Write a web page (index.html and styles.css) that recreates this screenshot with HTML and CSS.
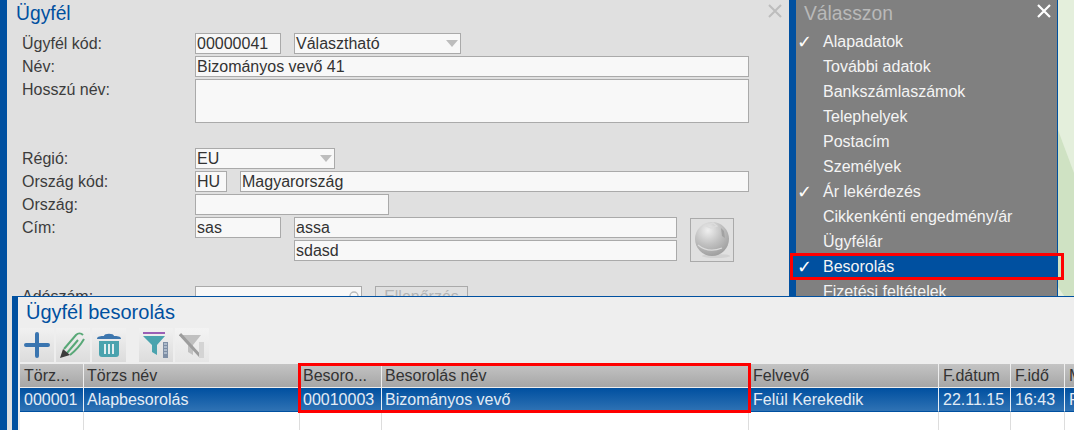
FILE: index.html
```html
<!DOCTYPE html>
<html lang="hu">
<head>
<meta charset="utf-8">
<title>Ügyfél</title>
<link rel="stylesheet" href="styles.css">
</head>
<body>
<div class="screen">
  <section class="form-panel">
    <header class="form-head">
      <h1 class="title">Ügyfél</h1>
      <svg class="close" width="14" height="14" viewBox="0 0 14 14"><path d="M1 1L13 13M13 1L1 13" stroke="#bdbdbd" stroke-width="2" fill="none"/></svg>
    </header>
    <div class="row">
      <label class="lbl">Ügyfél kód:</label>
      <div class="fld w86">00000041</div>
      <div class="fld sel w167 ml13">Választható<i class="arrow"></i></div>
    </div>
    <div class="row">
      <label class="lbl">Név:</label>
      <div class="fld w554">Bizományos vevő 41</div>
    </div>
    <div class="row tall">
      <label class="lbl">Hosszú név:</label>
      <div class="fld w554 h44"></div>
    </div>
    <div class="row gap-top">
      <label class="lbl">Régió:</label>
      <div class="fld sel w140">EU<i class="arrow"></i></div>
    </div>
    <div class="row">
      <label class="lbl">Ország kód:</label>
      <div class="fld w32">HU</div>
      <div class="fld w509 ml13">Magyarország</div>
    </div>
    <div class="row">
      <label class="lbl">Ország:</label>
      <div class="fld w194"></div>
    </div>
    <div class="addr">
      <label class="lbl">Cím:</label>
      <div class="fld w86">sas</div>
      <div class="addr-lines">
        <div class="fld w383">assa</div>
        <div class="fld w383">sdasd</div>
      </div>
      <div class="globe-btn">
        <svg width="36" height="38" viewBox="0 0 36 38">
          <defs>
            <radialGradient id="gl" cx="38%" cy="25%" r="80%">
              <stop offset="0" stop-color="#efefef"/>
              <stop offset=".5" stop-color="#c2c2c2"/>
              <stop offset="1" stop-color="#9c9c9c"/>
            </radialGradient>
          </defs>
          <ellipse cx="22" cy="35" rx="14" ry="2" fill="#d2d2d2"/>
          <circle cx="18" cy="18" r="17" fill="url(#gl)"/>
          <path d="M27 7l3 3 1 7-3-2z" fill="#a2a2a2"/>
          <path d="M12 5l7-3 4 3-6 2zM4 24c6 5 14 7 24 3" stroke="#dcdcdc" stroke-width="1.2" fill="none"/>
        </svg>
      </div>
    </div>
    <div class="row tax">
      <label class="lbl">Adószám:</label>
      <div class="fld w167"><svg class="lens" width="12" height="12" viewBox="0 0 12 12"><circle cx="6" cy="6" r="4" stroke="#bbb" stroke-width="1.4" fill="none"/></svg></div>
      <div class="btn-check">Ellenőrzés</div>
    </div>
  </section>

  <nav class="menu">
    <div class="menu-head">
      <span class="menu-title">Válasszon</span>
      <svg width="14" height="14" viewBox="0 0 14 14"><path d="M1 1L13 13M13 1L1 13" stroke="#fff" stroke-width="2.2" fill="none"/></svg>
    </div>
    <ul class="menu-list">
      <li class="item on">Alapadatok</li>
      <li class="item">További adatok</li>
      <li class="item">Bankszámlaszámok</li>
      <li class="item">Telephelyek</li>
      <li class="item">Postacím</li>
      <li class="item">Személyek</li>
      <li class="item on">Ár lekérdezés</li>
      <li class="item">Cikkenkénti engedmény/ár</li>
      <li class="item">Ügyfélár</li>
      <li class="item on active">Besorolás</li>
      <li class="item">Fizetési feltételek</li>
    </ul>
  </nav>

  <aside class="wallpaper">
    <svg class="wall-art" width="16" height="300" viewBox="0 0 16 300">
      <rect width="16" height="300" fill="#e4efdc"/>
      <path d="M0 130L16 173V300H9L0 287z" fill="#cfe2c3"/>
    </svg>
  </aside>

  <section class="sub-panel">
    <h2 class="sub-title">Ügyfél besorolás</h2>
    <div class="toolbar">
      <button class="tool">
        <svg width="26" height="26" viewBox="0 0 26 26"><path d="M13 2V24M2 13H24" stroke="#3a75b0" stroke-width="4" stroke-linecap="round" fill="none"/></svg>
      </button>
      <button class="tool">
        <svg width="28" height="28" viewBox="0 0 28 28"><path d="M5 18L17 4c2-2 5-2 7 0M8 22L19 9M11 24c5-4 10-9 14-16" stroke="#58a877" stroke-width="2" fill="none"/><path d="M1 27l3-9 7 6z" fill="#3c3c3c"/></svg>
      </button>
      <button class="tool">
        <svg width="26" height="26" viewBox="0 0 26 26"><path d="M1 7c0-3 4-3 7-3 0-3 10-3 10 0 3 0 7 0 7 3z" fill="#3d76ae"/><path d="M3 9H23V22c0 2-1 3-3 3H6c-2 0-3-1-3-3z" fill="#4aa3ae"/><path d="M9 12V22M13 12V22M17 12V22" stroke="#e2eef0" stroke-width="2"/></svg>
      </button>
      <button class="tool tool-gap">
        <svg width="26" height="26" viewBox="0 0 26 26"><path d="M0 1H22" stroke="#9a5fb5" stroke-width="2"/><path d="M0 4H22L14 13V23L9 20V13z" fill="#4aa3ae"/><rect x="20" y="10" width="5" height="16" fill="#7f8fa5"/><path d="M21 12h3M21 15h3M21 18h3M21 21h3" stroke="#dde6f0"/></svg>
      </button>
      <button class="tool off">
        <svg width="26" height="26" viewBox="0 0 26 26"><path d="M0 3H22L14 13V23L9 20V13z" fill="#c0c0c0"/><path d="M1 2L22 25" stroke="#9d9d9d" stroke-width="3"/><rect x="20" y="10" width="5" height="16" fill="#d4d4d4"/></svg>
      </button>
    </div>
    <div class="grid">
      <div class="hd">Törz...</div>
      <div class="hd tight">Törzs név</div>
      <div class="hd tight">Besoro...</div>
      <div class="hd tight">Besorolás név</div>
      <div class="hd">Felvevő</div>
      <div class="hd">F.dátum</div>
      <div class="hd">F.idő</div>
      <div class="hd">M</div>
      <div class="cell">000001</div>
      <div class="cell tight">Alapbesorolás</div>
      <div class="cell tight">00010003</div>
      <div class="cell tight">Bizományos vevő</div>
      <div class="cell">Felül Kerekedik</div>
      <div class="cell">22.11.15</div>
      <div class="cell">16:43</div>
      <div class="cell">F</div>
      <div class="blank"></div>
      <div class="blank"></div>
      <div class="blank"></div>
      <div class="blank"></div>
      <div class="blank"></div>
      <div class="blank"></div>
      <div class="blank"></div>
      <div class="blank"></div>
    </div>
    <div class="mark-cols"></div>
  </section>
</div>
</body>
</html>
```
FILE: styles.css
```css
* { box-sizing: border-box; }
html, body { margin: 0; padding: 0; }
body {
  width: 1074px;
  height: 430px;
  overflow: hidden;
  font-family: "Liberation Sans", Arial, sans-serif;
  font-size: 16px;
  color: #333;
  background: #e0e0e0;
}
.screen {
  position: relative;
  display: flex;
  width: 1074px;
  height: 430px;
  overflow: hidden;
}

/* Form panel */
.form-panel {
  width: 796px;
  flex: none;
  height: 430px;
  background: #e0e0e0;
  border-left: 7px solid #0050a0;
  border-right: 7px solid #0050a0;
  padding: 0 0 0 15px;
}
.form-head {
  display: flex;
  justify-content: space-between;
  height: 33px;
  margin-left: -6px;
  padding: 3px 7px 0 0;
}
.title {
  margin: 0;
  font-size: 19.3px;
  font-weight: 400;
  line-height: 22px;
  color: #0050a0;
}
.close { margin-top: 1px; }
.row {
  display: flex;
  height: 21px;
  margin-bottom: 2px;
  line-height: 21px;
}
.row.tall { height: 44px; margin-bottom: 25px; }
.lbl { width: 173px; flex: none; color: #3c3c3c; font-size: 16px; line-height: 21px; }
.fld {
  position: relative;
  height: 21px;
  flex: none;
  background: #f8f8f8;
  border: 1px solid #aaa;
  padding: 0 1px;
  line-height: 19px;
  color: #333;
  white-space: nowrap;
  overflow: hidden;
}
.w32 { width: 32px; }
.w86 { width: 86px; }
.w140 { width: 140px; }
.w167 { width: 167px; }
.w194 { width: 194px; }
.w383 { width: 383px; }
.w509 { width: 509px; }
.w554 { width: 554px; }
.h44 { height: 44px; }
.ml13 { margin-left: 13px; }
.sel .arrow {
  position: absolute;
  right: 2px;
  top: 6px;
  width: 0;
  height: 0;
  border-left: 6px solid transparent;
  border-right: 6px solid transparent;
  border-top: 7px solid #bdbdbd;
}
.addr {
  display: flex;
  line-height: 21px;
  height: 69px;
}
.addr-lines {
  display: flex;
  flex-direction: column;
  gap: 2px;
  margin-left: 13px;
}
.globe-btn {
  display: flex;
  align-items: center;
  justify-content: center;
  width: 44px;
  height: 44px;
  margin: 1px 0 0 13px;
  border: 1px solid #aaa;
}
.tax .lens { position: absolute; right: 1px; top: 3px; }
.btn-check {
  margin-left: 13px;
  width: 93px;
  height: 21px;
  border: 1px solid #aaa;
  text-align: center;
  line-height: 19px;
  color: #b4b4b4;
}

/* Menu */
.menu {
  width: 261px;
  flex: none;
  height: 430px;
  background: #808080;
  color: #f4f4f4;
}
.menu-head {
  display: flex;
  justify-content: space-between;
  height: 29px;
  padding: 4px 6px 0 8px;
}
.menu-title {
  font-size: 19.3px;
  line-height: 20px;
  color: #b9b9b9;
}
.menu-list {
  list-style: none;
  margin: 0;
  padding: 0;
}
.item {
  position: relative;
  height: 25px;
  padding-left: 27px;
  font-size: 16px;
  line-height: 25px;
}
.item.on::before {
  content: "✓";
  position: absolute;
  left: 1px;
  top: 0;
  font-family: "DejaVu Sans", sans-serif;
  font-size: 18px;
  color: #fff;
}
.item.active { background: #0050a0; height: 23px; margin: 1px 0; line-height: 23px; }
.item.active::after {
  content: "";
  position: absolute;
  left: -6px;
  right: -7px;
  top: -2px;
  bottom: -2px;
  border: 3px solid #f00;
}

/* Wallpaper */
.wallpaper {
  flex: 1;
  height: 430px;
  border-left: 1px solid #0050a0;
}
.wall-art { display: block; }

/* Bottom panel */
.sub-panel {
  position: absolute;
  left: 12px;
  right: 0;
  top: 296px;
  bottom: 0;
  background: #eeeeee;
  border-top: 1px solid #0050a0;
  border-left: 6px solid #0050a0;
  padding-left: 2px;
}
.sub-title {
  margin: 0;
  height: 31px;
  padding: 3px 0 0 6px;
  font-size: 20px;
  font-weight: 400;
  line-height: 24px;
  color: #0050a0;
}
.toolbar {
  display: flex;
  gap: 2px;
  height: 36px;
}
.tool {
  display: flex;
  align-items: center;
  justify-content: center;
  width: 34px;
  height: 34px;
  padding: 0;
  border: 0;
  background: linear-gradient(#f1f1f1, #dcdcdc);
}
.tool-gap { margin-left: 11px; }
.tool.off { background: linear-gradient(#f3f3f3, #e6e6e6); }

.grid {
  display: grid;
  grid-template-columns: 64px 216px 82px 367px 190px 72px 54px 40px;
  grid-template-rows: 24px 24px 20px;
  background: #fff;
}
.hd {
  height: 24px;
  padding-left: 4px;
  line-height: 23px;
  color: #333;
  background: linear-gradient(#c4c4c4, #a6a6a6);
  border-right: 1px solid #eee;
  border-bottom: 1px solid #eee;
  white-space: nowrap;
  overflow: hidden;
}
.cell {
  height: 24px;
  padding-left: 4px;
  line-height: 24px;
  color: #e4ecf5;
  background: linear-gradient(#0050a0, #2f72b4);
  border-right: 1px solid #e8eef5;
  border-bottom: 1px solid #0050a0;
  white-space: nowrap;
  overflow: hidden;
}
.hd.tight, .cell.tight { padding-left: 3px; }
.blank { border-right: 1px solid #ddd; }

.mark-cols {
  position: absolute;
  left: 280px;
  top: 66px;
  width: 453px;
  height: 50px;
  border: 3px solid #f00;
}
```
